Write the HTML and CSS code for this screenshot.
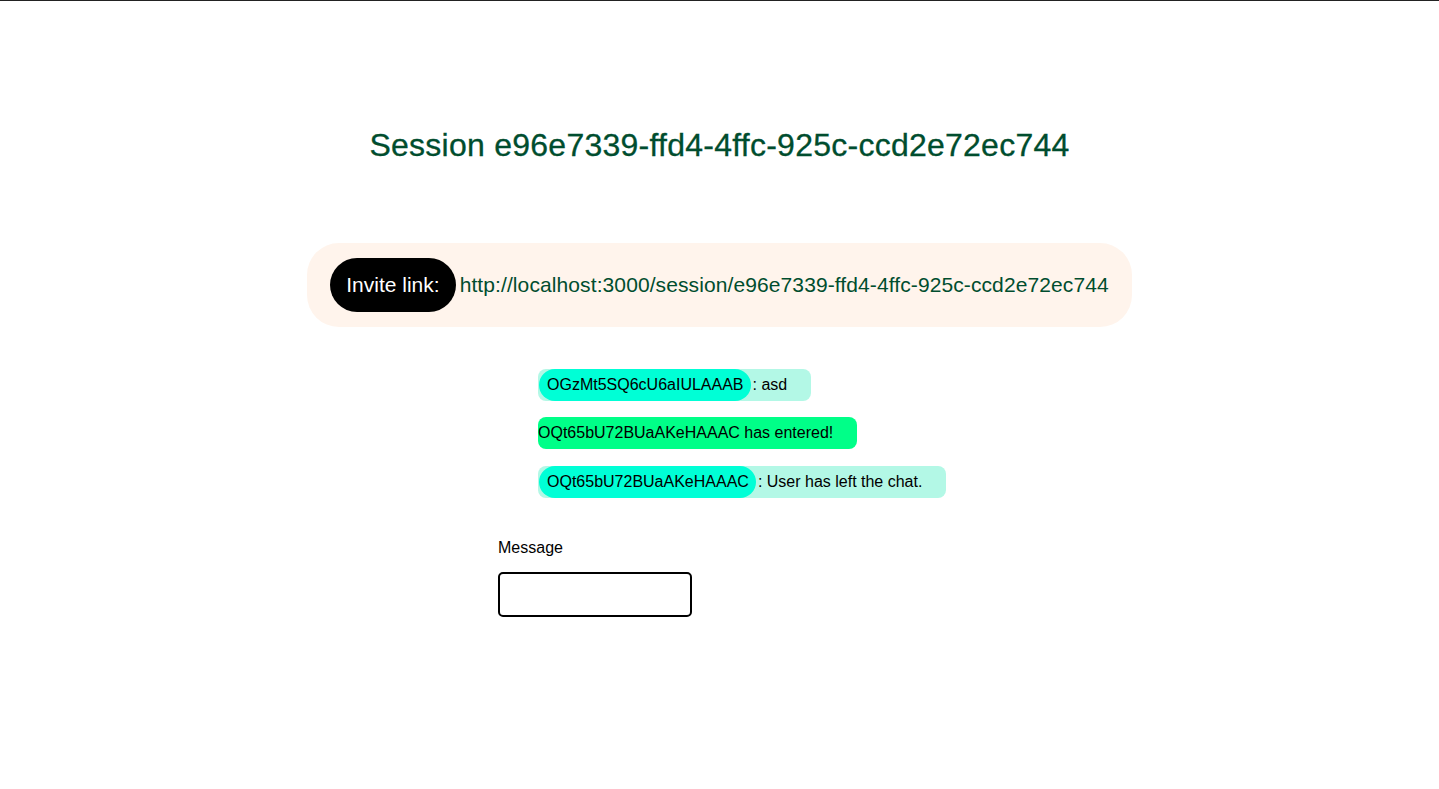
FILE: index.html
```html
<!DOCTYPE html>
<html>
<head>
<meta charset="utf-8">
<link rel="stylesheet" href="styles.css">
</head>
<body>
<div class="topline"></div>
<main class="page">
  <h1 class="title">Session e96e7339-ffd4-4ffc-925c-ccd2e72ec744</h1>
  <div class="invite">
    <span class="invite-label">Invite link:</span>
    <span class="invite-url">http://localhost:3000/session/e96e7339-ffd4-4ffc-925c-ccd2e72ec744</span>
  </div>
  <section class="chat">
    <ul class="messages">
      <li class="msg"><span class="user">OGzMt5SQ6cU6aIULAAAB</span><span class="text">: asd</span></li>
      <li class="msg joined">OQt65bU72BUaAKeHAAAC has entered!</li>
      <li class="msg"><span class="user">OQt65bU72BUaAKeHAAAC</span><span class="text">: User has left the chat.</span></li>
    </ul>
    <label class="field-label" for="m">Message</label>
    <input class="field" id="m" type="text">
  </section>
</main>
</body>
</html>
```

FILE: styles.css
```css
html, body {
  margin: 0;
  padding: 0;
  background: #ffffff;
  font-family: "Liberation Sans", Arial, sans-serif;
  color: #000;
}
.topline {
  height: 1px;
  background: #222222;
}
.page {
  display: flex;
  flex-direction: column;
  align-items: center;
}
.title {
  margin: 125px 0 0 0;
  font-size: 32px;
  font-weight: 400;
  line-height: 38px;
  color: #004d2e;
  letter-spacing: 0.25px;
  -webkit-text-stroke: 0.3px #004d2e;
  white-space: nowrap;
}
.invite {
  margin-top: 79px;
  display: flex;
  align-items: center;
  gap: 4px;
  background: #fff4ec;
  border-radius: 32px;
  padding: 15px 23px;
  width: max-content;
  white-space: nowrap;
}
.invite-label {
  flex-shrink: 0;
  background: #000;
  color: #fff;
  border-radius: 27px;
  height: 54px;
  padding: 0 16px;
  display: flex;
  align-items: center;
  font-size: 21px;
}
.invite-url {
  flex-shrink: 0;
  color: #004d2e;
  font-size: 21px;
  letter-spacing: 0.1px;
}
.chat {
  width: 443px;
  margin-top: 42px;
  display: flex;
  flex-direction: column;
  align-items: flex-start;
}
.messages {
  list-style: none;
  margin: 0;
  padding: 0 0 0 40px;
  display: flex;
  flex-direction: column;
  align-items: flex-start;
  gap: 16px;
  width: max-content;
}
.msg {
  display: flex;
  align-items: center;
  height: 32px;
  background: #b3f8e6;
  border-radius: 8px;
  font-size: 16px;
  padding-right: 24px;
  white-space: nowrap;
  width: max-content;
}
.msg:last-child {
  margin-top: 1px;
}
.user {
  background: #00ffd6;
  height: 32px;
  display: flex;
  align-items: center;
  padding: 0 7px 0 8px;
  border-radius: 16px;
  margin-left: 1px;
}
.text {
  padding-left: 2px;
}
.joined {
  background: #00ff88;
  padding-right: 24px;
}
.field-label {
  margin-top: 41px;
  font-size: 16px;
  line-height: 18px;
}
.field {
  margin-top: 15px;
  width: 194px;
  height: 45px;
  box-sizing: border-box;
  border: 2px solid #000;
  border-radius: 5px;
  font-size: 16px;
  padding: 0 8px;
}
```
